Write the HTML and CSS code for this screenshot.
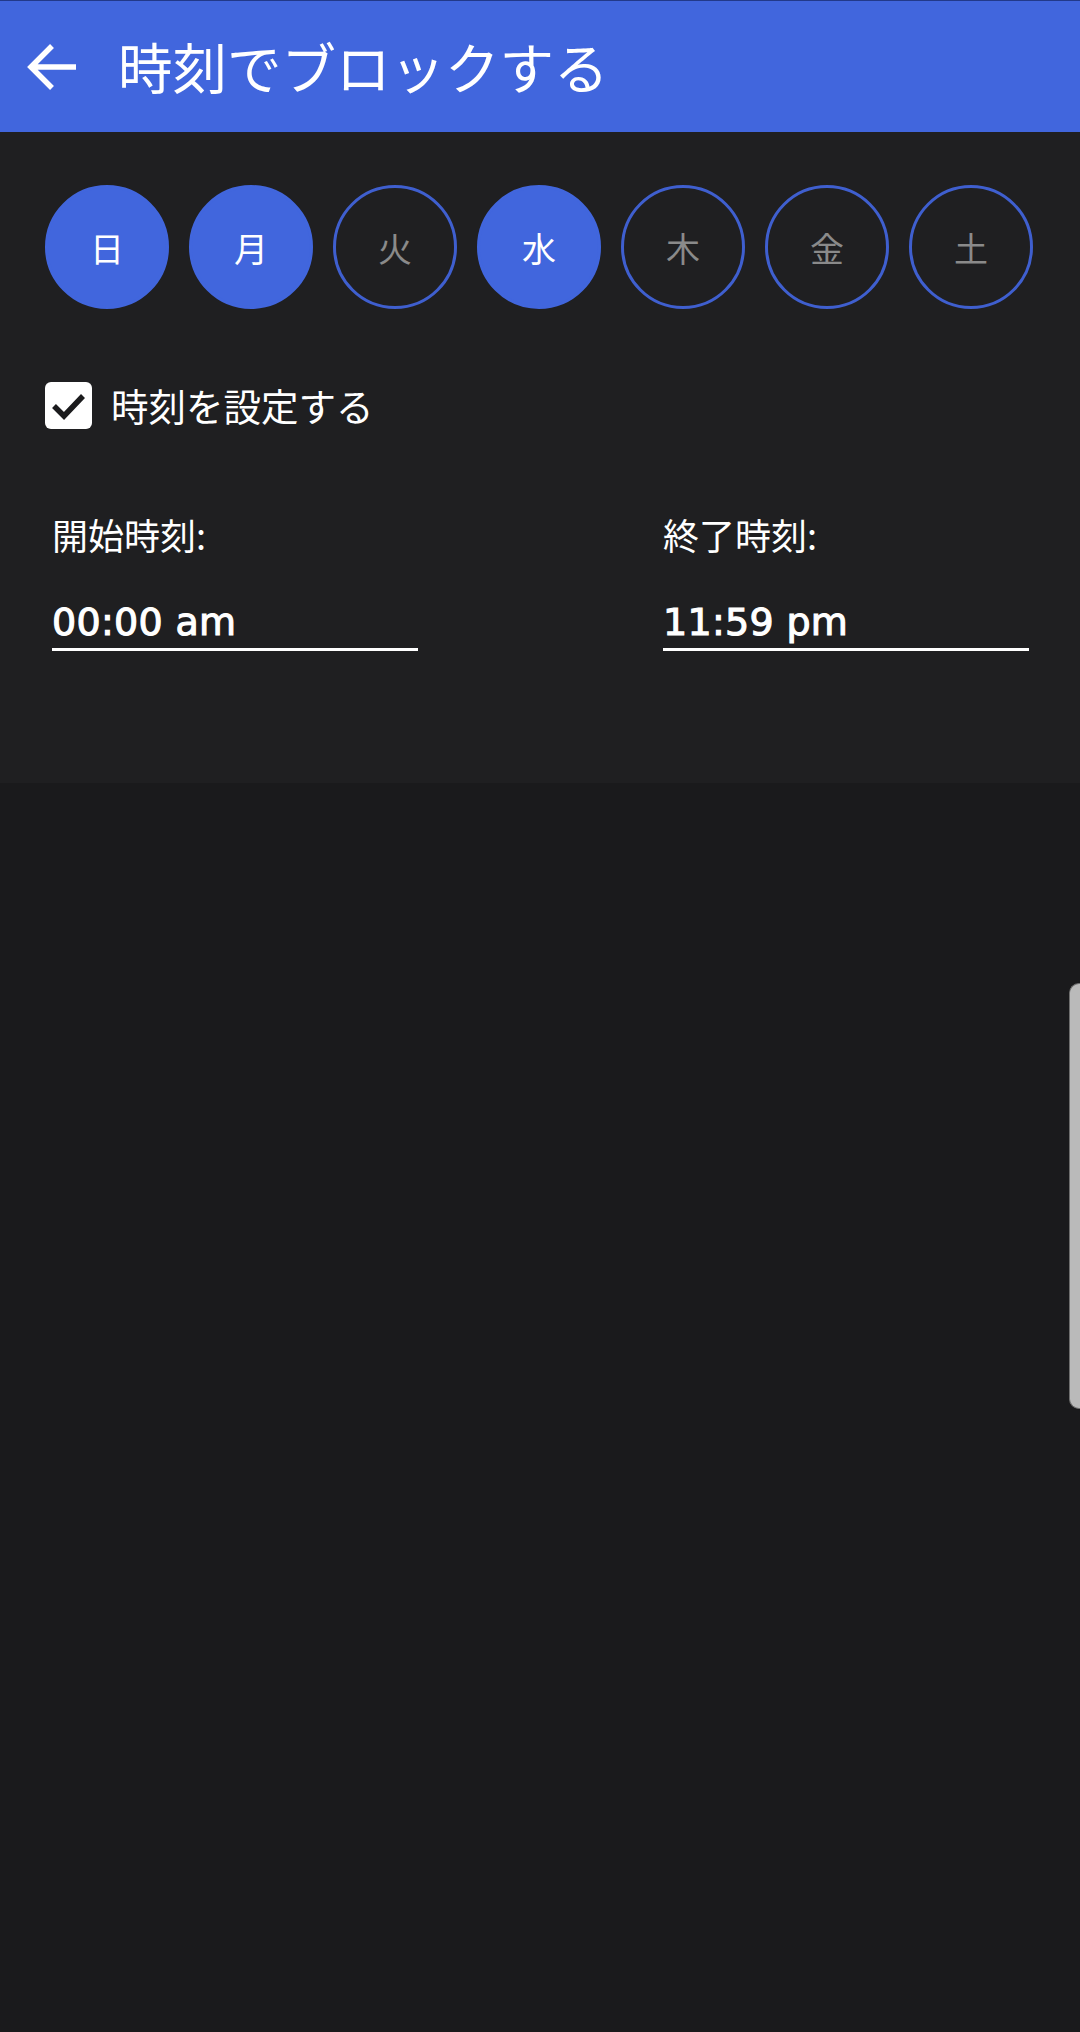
FILE: index.html
```html
<!DOCTYPE html>
<html lang="ja">
<head>
<meta charset="utf-8">
<link rel="stylesheet" href="styles.css">
</head>
<body>
<header class="appbar">
  <svg class="back" viewBox="0 0 52 52" width="52" height="52">
    <path d="M50 26H6M26 5L5 26l21 21" fill="none" stroke="#fff" stroke-width="5.5" stroke-linecap="butt" stroke-linejoin="miter"/>
  </svg>
  <h1 class="title">時刻でブロックする</h1>
</header>
<main class="panel">
  <div class="days">
    <div class="day on">日</div>
    <div class="day on">月</div>
    <div class="day">火</div>
    <div class="day on">水</div>
    <div class="day">木</div>
    <div class="day">金</div>
    <div class="day">土</div>
  </div>
  <div class="check-row">
    <div class="checkbox">
      <svg viewBox="0 0 47 47" width="47" height="47">
        <path d="M9 24l10 10 19-20" fill="none" stroke="#1b1b1d" stroke-width="5.5"/>
      </svg>
    </div>
    <span class="check-label">時刻を設定する</span>
  </div>
  <div class="fields">
    <div class="field">
      <div class="field-label">開始時刻:</div>
      <div class="field-value">00:00 am</div>
    </div>
    <div class="field">
      <div class="field-label">終了時刻:</div>
      <div class="field-value">11:59 pm</div>
    </div>
  </div>
</main>
<div class="edge-handle"></div>
</body>
</html>
```
FILE: styles.css
```css
html, body {
  margin: 0;
  padding: 0;
}
body {
  width: 1080px;
  height: 2032px;
  background: #1a1a1c;
  font-family: "Noto Sans CJK JP", "Noto Sans", sans-serif;
  color: #fff;
  position: relative;
  overflow: hidden;
}
.appbar {
  box-sizing: border-box;
  height: 132px;
  border-top: 1px solid #22398a;
  background: #4166dd;
  display: flex;
  align-items: center;
  padding-left: 26px;
}
.back {
  display: block;
  flex: none;
}
.title {
  margin: 0 0 0 40px;
  font-size: 54.5px;
  font-weight: 400;
  line-height: 1;
  color: #fff;
}
.panel {
  display: block;
  background: #1f1f21;
  height: 651px;
  box-sizing: border-box;
  padding-top: 53px;
}
.days {
  display: flex;
  gap: 20px;
  padding-left: 45px;
}
.day {
  width: 124px;
  height: 124px;
  border-radius: 50%;
  box-sizing: border-box;
  border: 3px solid #3f5fcf;
  display: flex;
  align-items: center;
  justify-content: center;
  font-size: 34px;
  color: #8a8a8a;
}
.day.on {
  background: #4166dd;
  border-color: #4166dd;
  color: #fff;
}
.check-row {
  display: flex;
  align-items: center;
  margin-top: 72px;
  padding-left: 45px;
  height: 48px;
}
.checkbox {
  width: 47px;
  height: 47px;
  border-radius: 6px;
  background: #fff;
  flex: none;
}
.checkbox svg {
  display: block;
}
.check-label {
  margin-left: 19px;
  font-size: 37.5px;
  line-height: 48px;
}
.fields {
  display: flex;
  gap: 245px;
  padding-left: 52px;
  margin-top: 81px;
}
.field {
  width: 366px;
}
.field-label {
  font-size: 36px;
  line-height: 48px;
}
.field-value {
  margin-top: 40px;
  font-family: "DejaVu Sans", sans-serif;
  font-size: 38px;
  line-height: 48px;
  -webkit-text-stroke: 1.1px #fff;
  letter-spacing: 0.3px;
  padding-bottom: 2px;
  border-bottom: 3px solid #fff;
}
.edge-handle {
  position: absolute;
  right: 0;
  top: 983px;
  width: 10px;
  height: 424px;
  background: #bababa;
  border: 1px solid #6e6e6e;
  border-right: none;
  border-radius: 10px 0 0 10px;
}
```
